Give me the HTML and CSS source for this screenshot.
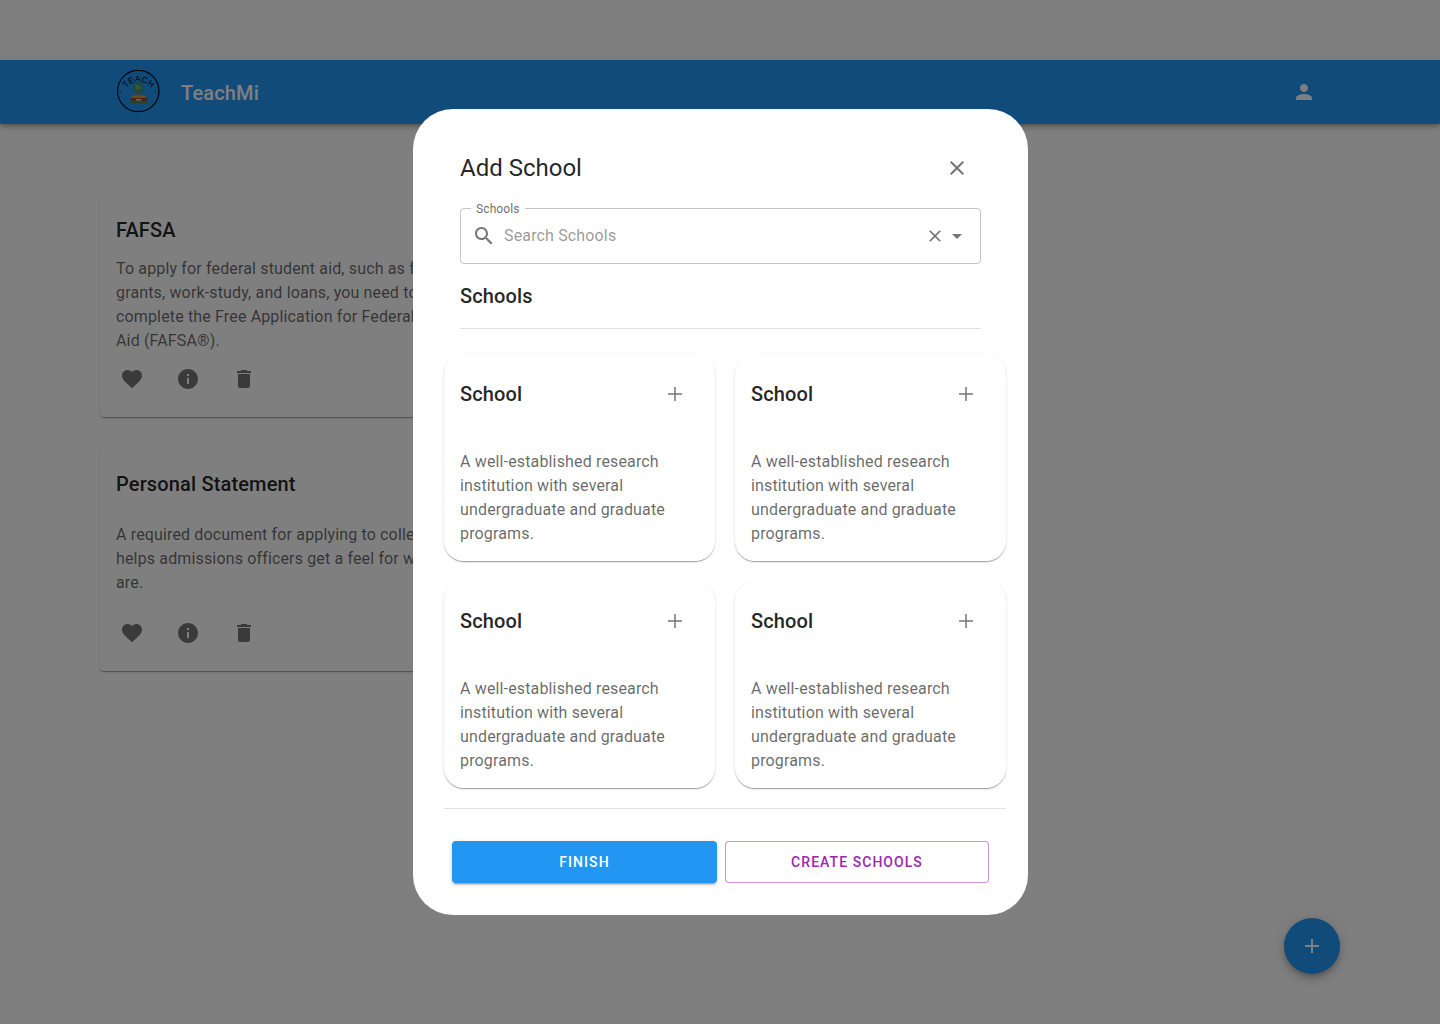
FILE: index.html
```html
<!DOCTYPE html>
<html lang="en">
<head>
<meta charset="utf-8">
<title>TeachMi</title>
<link rel="stylesheet" href="styles.css">
</head>
<body>
<div class="page">
  <header class="appbar">
    <div class="brand">
      <svg class="logo" viewBox="0 0 44 44" aria-hidden="true">
        <circle cx="22.300" cy="21" r="20.700" fill="none" stroke="#0a0a0a" stroke-width="1.200"/>
        <path id="logo-arc" d="M11 17 A15 15 0 0 1 34 17" fill="none"/>
        <text class="logo-text"><textPath href="#logo-arc" startOffset="50%" text-anchor="middle">TEACH</textPath></text>
        <circle cx="22.500" cy="18" r="6" fill="#3f8f96"/>
        <path d="M19 15h4l1.500 3-3 2.500-2-2.500z" fill="#6fae5e"/>
        <path d="M21 24h3v1.500h-3z" fill="#a8833a"/>
        <rect x="15.500" y="25.500" width="14" height="2.500" fill="#c9a23a"/>
        <rect x="14.500" y="28" width="17" height="2.700" fill="#a33a3a"/>
        <rect x="14" y="30.700" width="18" height="2.600" fill="#4d8a4d"/>
        <rect x="20" y="29" width="5" height="1.500" fill="#e8d9a0"/>
        <circle cx="5" cy="22" r=".6" fill="#0a0a0a"/>
        <circle cx="39.500" cy="22" r=".6" fill="#0a0a0a"/>
      </svg>
      <span class="brand-name">TeachMi</span>
    </div>
    <svg class="icon icon-white" viewBox="0 0 24 24"><path d="M12 12c2.210 0 4-1.790 4-4s-1.790-4-4-4-4 1.790-4 4 1.790 4 4 4zm0 2c-2.670 0-8 1.340-8 4v2h16v-2c0-2.660-5.330-4-8-4z"/></svg>
  </header>

  <main class="list">
    <article class="doc-card">
      <h2 class="doc-title">FAFSA</h2>
      <div class="doc-body"><p>To apply for federal student aid, such as federal grants, work-study, and loans, you need to complete the Free Application for Federal Student Aid (FAFSA®).</p></div>
      <div class="doc-actions">
        <svg class="icon" viewBox="0 0 24 24"><path d="M12 21.35l-1.45-1.32C5.4 15.36 2 12.28 2 8.5 2 5.42 4.42 3 7.5 3c1.74 0 3.41.81 4.5 2.09C13.09 3.81 14.76 3 16.5 3 19.58 3 22 5.42 22 8.5c0 3.78-3.4 6.86-8.55 11.54L12 21.35z"/></svg>
        <svg class="icon" viewBox="0 0 24 24"><path d="M12 2C6.48 2 2 6.48 2 12s4.48 10 10 10 10-4.48 10-10S17.52 2 12 2zm1 15h-2v-6h2v6zm0-8h-2V7h2v2z"/></svg>
        <svg class="icon" viewBox="0 0 24 24"><path d="M6 19c0 1.1.9 2 2 2h8c1.1 0 2-.9 2-2V7H6v12zM19 4h-3.5l-1-1h-5l-1 1H5v2h14V4z"/></svg>
      </div>
    </article>
    <article class="doc-card">
      <h2 class="doc-title">Personal Statement</h2>
      <div class="doc-body"><p>A required document for applying to colleges that helps admissions officers get a feel for who you are.</p></div>
      <div class="doc-actions">
        <svg class="icon" viewBox="0 0 24 24"><path d="M12 21.35l-1.45-1.32C5.4 15.36 2 12.28 2 8.5 2 5.42 4.42 3 7.5 3c1.74 0 3.41.81 4.5 2.09C13.09 3.81 14.76 3 16.5 3 19.58 3 22 5.42 22 8.5c0 3.78-3.4 6.86-8.55 11.54L12 21.35z"/></svg>
        <svg class="icon" viewBox="0 0 24 24"><path d="M12 2C6.48 2 2 6.48 2 12s4.48 10 10 10 10-4.48 10-10S17.52 2 12 2zm1 15h-2v-6h2v6zm0-8h-2V7h2v2z"/></svg>
        <svg class="icon" viewBox="0 0 24 24"><path d="M6 19c0 1.1.9 2 2 2h8c1.1 0 2-.9 2-2V7H6v12zM19 4h-3.5l-1-1h-5l-1 1H5v2h14V4z"/></svg>
      </div>
    </article>
  </main>

  <button class="fab" type="button" aria-label="Add">
    <svg class="icon icon-white" viewBox="0 0 24 24"><path d="M19 13h-6v6h-2v-6H5v-2h6V5h2v6h6v2z"/></svg>
  </button>
</div>

<div class="backdrop"></div>

<section class="modal">
  <div class="modal-top">
    <div class="modal-head">
      <h1 class="modal-title">Add School</h1>
      <svg class="icon close" viewBox="0 0 24 24"><path d="M19 6.41 17.59 5 12 10.59 6.41 5 5 6.41 10.59 12 5 17.59 6.41 19 12 13.41 17.59 19 19 17.59 13.41 12z"/></svg>
    </div>
    <div class="field">
      <span class="field-label">Schools</span>
      <svg class="icon" viewBox="0 0 24 24"><path d="M15.5 14h-.79l-.28-.27C15.41 12.59 16 11.11 16 9.5 16 5.91 13.09 3 9.5 3S3 5.91 3 9.5 5.91 16 9.5 16c1.61 0 3.09-.59 4.23-1.57l.27.28v.79l5 4.99L20.49 19l-4.99-5zm-6 0C7.01 14 5 11.99 5 9.5S7.01 5 9.5 5 14 7.01 14 9.5 11.99 14 9.5 14z"/></svg>
      <span class="field-placeholder">Search Schools</span>
      <svg class="icon icon-small" viewBox="0 0 24 24"><path d="M19 6.41 17.59 5 12 10.59 6.41 5 5 6.41 10.59 12 5 17.59 6.41 19 12 13.41 17.59 19 19 17.59 13.41 12z"/></svg>
      <svg class="icon" viewBox="0 0 24 24"><path d="M7 10l5 5 5-5z"/></svg>
    </div>
    <h2 class="section-title">Schools</h2>
    <hr class="rule">
  </div>

  <div class="school-grid">
    <article class="school-card">
      <div class="school-head"><h3 class="school-name">School</h3><svg class="icon plus" viewBox="0 0 24 24"><path d="M19 12.75h-6.25V19h-1.5v-6.25H5v-1.5h6.25V5h1.5v6.25H19z"/></svg></div>
      <p class="school-text">A well-established research institution with several undergraduate and graduate programs.</p>
    </article>
    <article class="school-card">
      <div class="school-head"><h3 class="school-name">School</h3><svg class="icon plus" viewBox="0 0 24 24"><path d="M19 12.75h-6.25V19h-1.5v-6.25H5v-1.5h6.25V5h1.5v6.25H19z"/></svg></div>
      <p class="school-text">A well-established research institution with several undergraduate and graduate programs.</p>
    </article>
    <article class="school-card">
      <div class="school-head"><h3 class="school-name">School</h3><svg class="icon plus" viewBox="0 0 24 24"><path d="M19 12.75h-6.25V19h-1.5v-6.25H5v-1.5h6.25V5h1.5v6.25H19z"/></svg></div>
      <p class="school-text">A well-established research institution with several undergraduate and graduate programs.</p>
    </article>
    <article class="school-card">
      <div class="school-head"><h3 class="school-name">School</h3><svg class="icon plus" viewBox="0 0 24 24"><path d="M19 12.75h-6.25V19h-1.5v-6.25H5v-1.5h6.25V5h1.5v6.25H19z"/></svg></div>
      <p class="school-text">A well-established research institution with several undergraduate and graduate programs.</p>
    </article>
  </div>

  <div class="modal-foot">
    <button class="btn btn-primary" type="button">Finish</button>
    <button class="btn btn-outline" type="button">Create Schools</button>
  </div>
</section>
</body>
</html>
```

FILE: styles.css
```css
* { box-sizing: border-box; }
html, body { margin: 0; height: 100%; }
body {
  font-family: Roboto, "Liberation Sans", sans-serif;
  background: #fff;
  color: rgba(0, 0, 0, 0.87);
  overflow: hidden;
}
h1, h2, h3, p { margin: 0; }

.icon { width: 24px; height: 24px; fill: rgba(0, 0, 0, 0.54); flex: none; display: block; }
.icon-white { fill: #fff; }
.icon-small { width: 20px; height: 20px; }

.page { padding-top: 60px; min-height: 100%; }
.appbar {
  height: 64px;
  background: #2196f3;
  padding: 0 124px 0 116px;
  display: flex;
  align-items: center;
  justify-content: space-between;
  box-shadow: 0 2px 4px -1px rgba(0,0,0,.2), 0 4px 5px rgba(0,0,0,.14), 0 1px 10px rgba(0,0,0,.12);
}
.brand { display: flex; align-items: center; gap: 21px; }
.logo { width: 44px; height: 44px; display: block; }
.logo-text { font-family: "Liberation Sans", sans-serif; font-size: 8.500px; fill: #0a0a0a; }
.brand-name { font-size: 20px; font-weight: 500; letter-spacing: 0.15px; color: #fff; padding-top: 1px; }

.list { padding: 71px 0 0 100px; display: flex; flex-direction: column; gap: 32px; }
.doc-card {
  width: 396px;
  height: 222px;
  background: #fff;
  border-radius: 4px;
  padding: 19px 16px 0;
  box-shadow: 0 2px 1px -1px rgba(0,0,0,.2), 0 1px 1px rgba(0,0,0,.14), 0 1px 3px rgba(0,0,0,.12);
}
.doc-title { font-size: 20px; line-height: 32px; font-weight: 500; letter-spacing: 0.15px; }
.doc-body {
  height: 96px;
  margin-top: 11px;
  display: flex;
  align-items: center;
  font-size: 16px;
  line-height: 24px;
  letter-spacing: 0.15px;
  color: rgba(0, 0, 0, 0.6);
}
.doc-actions { display: flex; gap: 32px; padding: 14px 0 0 4px; }

.fab {
  position: fixed;
  left: 1284px;
  top: 918px;
  width: 56px;
  height: 56px;
  border: 0;
  border-radius: 50%;
  background: #2196f3;
  display: flex;
  align-items: center;
  justify-content: center;
  box-shadow: 0 3px 5px -1px rgba(0,0,0,.2), 0 6px 10px rgba(0,0,0,.14), 0 1px 18px rgba(0,0,0,.12);
}

.backdrop { position: fixed; inset: 0; background: rgba(0, 0, 0, 0.5); }

.modal {
  position: fixed;
  left: 413px;
  top: 109px;
  width: 615px;
  height: 806px;
  background: #fff;
  border-radius: 40px;
  padding: 43px 22px 0 31px;
}
.modal-top { padding: 0 25px 0 16px; }
.modal-head { display: flex; align-items: flex-start; justify-content: space-between; height: 32px; padding-right: 12px; }
.modal-title { font-size: 24px; line-height: 32px; font-weight: 400; }
.close { margin-top: 4px; }

.field {
  position: relative;
  margin-top: 24px;
  height: 56px;
  border: 1px solid rgba(0, 0, 0, 0.23);
  border-radius: 4px;
  padding: 0 11px;
  display: flex;
  align-items: center;
}
.field-label {
  position: absolute;
  left: 10px;
  top: -8px;
  padding: 0 5px;
  background: #fff;
  font-size: 12px;
  line-height: 16px;
  letter-spacing: 0.11px;
  color: rgba(0, 0, 0, 0.6);
}
.field-placeholder { flex: 1; margin: 0 0 2px 8px; font-size: 16px; letter-spacing: 0.15px; color: rgba(0, 0, 0, 0.42); }

.section-title { margin-top: 16px; font-size: 20px; line-height: 32px; font-weight: 500; letter-spacing: 0.15px; }
.rule { margin: 16px 0 0; border: 0; border-top: 1px solid rgba(0, 0, 0, 0.12); }

.school-grid {
  margin-top: 25px;
  display: grid;
  grid-template-columns: 271px 271px;
  column-gap: 20px;
  row-gap: 20px;
  padding-bottom: 20px;
  border-bottom: 1px solid rgba(0, 0, 0, 0.12);
}
.school-card {
  height: 207px;
  border-radius: 20px;
  padding: 0 16px;
  background: #fff;
  box-shadow: 0 2px 1px -1px rgba(0,0,0,.2), 0 1px 1px rgba(0,0,0,.14), 0 1px 3px rgba(0,0,0,.12);
}
.school-head { height: 95px; padding: 24px 12px 0 0; display: flex; justify-content: space-between; align-items: flex-start; }
.school-name { font-size: 20px; line-height: 32px; font-weight: 500; letter-spacing: 0.15px; }
.plus { margin-top: 4px; }
.school-text { font-size: 16px; line-height: 24px; letter-spacing: 0.15px; color: rgba(0, 0, 0, 0.6); padding-top: 1px; }

.modal-foot { display: flex; gap: 8px; padding: 32px 0 0 8px; }
.btn {
  height: 42px;
  font-family: inherit;
  font-size: 14px;
  font-weight: 500;
  letter-spacing: 1.05px;
  text-transform: uppercase;
  border-radius: 4px;
}
.btn-primary {
  width: 265px;
  color: #fff;
  background: #2196f3;
  border: 0;
  box-shadow: 0 3px 1px -2px rgba(0,0,0,.2), 0 2px 2px rgba(0,0,0,.14), 0 1px 5px rgba(0,0,0,.12);
}
.btn-outline {
  width: 264px;
  color: #9c27b0;
  background: #fff;
  border: 1px solid rgba(156, 39, 176, 0.5);
}
```
